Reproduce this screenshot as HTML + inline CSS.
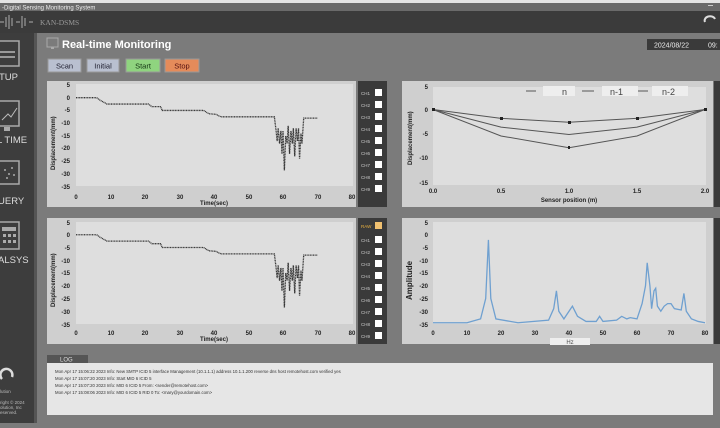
<!DOCTYPE html>
<html><head><meta charset="utf-8"><style>
body{margin:0;width:720px;height:423px;overflow:hidden;background:#7b7b7b;font-family:"Liberation Sans",sans-serif}
</style></head><body>
<svg width="720" height="423" xmlns="http://www.w3.org/2000/svg" font-family="Liberation Sans, sans-serif">
<rect width="720" height="423" fill="#7b7b7b"/>
<rect width="720" height="3" fill="#e4e4e4"/>
<rect y="3" width="720" height="8" fill="#6a6a6a"/>
<text x="2" y="9.5" font-size="6" fill="#eee">-Digital Sensing Monitoring System</text>
<rect x="708" y="5" width="5" height="1" fill="#ccc"/>
<rect y="11" width="720" height="22" fill="#3b3b3b"/>
<path d="M0 22 L4 22 M6 17 V27 M9 15 V29 M12 18 V26 M16 22 H20 M22 16 V28 M25 18 V26 M29 22 H33" stroke="#888" stroke-width="1.5"/>
<text x="40" y="25" font-size="7.5" fill="#999" font-family="Liberation Serif, serif">KAN-DSMS</text>
<path d="M705 22 a5 4 0 1 1 10 -3" stroke="#ddd" stroke-width="2" fill="none"/>
<rect x="0" y="33" width="34" height="390" fill="#3d3d3d"/>
<rect x="34" y="33" width="3" height="390" fill="#555"/>
<!-- sidebar -->
<g fill="none" stroke="#aaa" stroke-width="1.5">
<rect x="-2" y="41" width="21" height="25"/><rect x="-2" y="101" width="21" height="25"/><rect x="-2" y="161" width="21" height="23"/><rect x="-2" y="222" width="21" height="27"/>
</g>
<path d="M0 52 H15 M0 57 H15" stroke="#999" stroke-width="2"/>
<path d="M2 120 L8 114 L11 117 L17 108" stroke="#bbb" fill="none"/>
<rect x="4" y="127" width="6" height="4" fill="#aaa"/>
<g fill="#aaa"><circle cx="5" cy="170" r="1"/><circle cx="9" cy="174" r="1"/><circle cx="12" cy="168" r="1"/><circle cx="7" cy="178" r="1"/><circle cx="14" cy="175" r="1"/></g>
<g fill="#aaa"><rect x="2" y="227" width="14" height="4"/><rect x="3" y="234" width="3" height="3"/><rect x="8" y="234" width="3" height="3"/><rect x="13" y="234" width="3" height="3"/><rect x="3" y="240" width="3" height="3"/><rect x="8" y="240" width="3" height="3"/><rect x="13" y="240" width="3" height="3"/></g>
<g fill="#ddd" font-size="9.5"><text x="-1" y="80">TUP</text><text x="-3" y="143">L TIME</text><text x="-2" y="204">UERY</text><text x="-2" y="263">ALSYS</text></g>
<path d="M2 379 a6 6 0 1 1 10 -2" stroke="#ddd" stroke-width="2.5" fill="none"/>
<g fill="#bbb" font-size="4.5"><text x="0" y="393">lution</text><text x="0" y="404">right © 2024</text><text x="0" y="409">olution, Inc</text><text x="0" y="414">eserved.</text></g>
<!-- title -->
<rect x="47" y="38" width="11" height="9" fill="none" stroke="#aaa"/>
<rect x="51" y="47" width="3" height="2" fill="#aaa"/>
<text x="62" y="48" font-size="11" font-weight="bold" fill="#fff">Real-time Monitoring</text>
<rect x="647" y="39" width="73" height="11" fill="#3a3a3a"/>
<text x="654" y="47.5" font-size="7" fill="#eee">2024/08/22</text><text x="708" y="47.5" font-size="7" fill="#eee">09:</text>
<!-- buttons -->
<rect x="48" y="59" width="33" height="13" fill="#b9c0d0" stroke="#999"/><text x="64.5" y="68.5" font-size="7.5" text-anchor="middle" fill="#223">Scan</text>
<rect x="87" y="59" width="32" height="13" fill="#b9c0d0" stroke="#999"/><text x="103" y="68.5" font-size="7.5" text-anchor="middle" fill="#223">Initial</text>
<rect x="126" y="59" width="34" height="13" fill="#8fd47f" stroke="#999"/><text x="143" y="68.5" font-size="7.5" text-anchor="middle" fill="#131">Start</text>
<rect x="165" y="59" width="34" height="13" fill="#e58b5a" stroke="#999"/><text x="182" y="68.5" font-size="7.5" text-anchor="middle" fill="#511">Stop</text>
<!-- panels -->
<g>
<rect x="47" y="81" width="309" height="126" fill="#cfcfcf"/><rect x="76" y="84" width="277" height="102" fill="#dedede"/>
<rect x="47" y="218" width="309" height="126" fill="#cfcfcf"/><rect x="76" y="222" width="277" height="102" fill="#dedede"/>
<rect x="402" y="81" width="311" height="126" fill="#cfcfcf"/><rect x="433" y="87" width="273" height="98" fill="#dedede"/>
<rect x="402" y="218" width="311" height="126" fill="#cfcfcf"/><rect x="433" y="222" width="273" height="102" fill="#dedede"/>
<rect x="358" y="81" width="29" height="126" fill="#3a3a3a"/><rect x="358" y="218" width="29" height="126" fill="#3a3a3a"/>
<rect x="714" y="81" width="6" height="126" fill="#3a3a3a"/><rect x="714" y="218" width="6" height="126" fill="#3a3a3a"/>
</g>
<g font-size="4.5" fill="#ccc">
<text x="361" y="95">CH1</text><text x="361" y="107">CH2</text><text x="361" y="119">CH3</text><text x="361" y="131">CH4</text><text x="361" y="143">CH5</text><text x="361" y="155">CH6</text><text x="361" y="167">CH7</text><text x="361" y="179">CH8</text><text x="361" y="191">CH9</text>
<text x="361" y="228" fill="#e8b040">RAW</text><text x="361" y="242">CH1</text><text x="361" y="254">CH2</text><text x="361" y="266">CH3</text><text x="361" y="278">CH4</text><text x="361" y="290">CH5</text><text x="361" y="302">CH6</text><text x="361" y="314">CH7</text><text x="361" y="326">CH8</text><text x="361" y="338">CH9</text>
</g>
<g fill="#fff">
<rect x="375" y="89" width="7" height="7"/><rect x="375" y="101" width="7" height="7"/><rect x="375" y="113" width="7" height="7"/><rect x="375" y="125" width="7" height="7"/><rect x="375" y="137" width="7" height="7"/><rect x="375" y="149" width="7" height="7"/><rect x="375" y="161" width="7" height="7"/><rect x="375" y="173" width="7" height="7"/><rect x="375" y="185" width="7" height="7"/>
<rect x="375" y="222" width="7" height="7" fill="#f0c070"/><rect x="375" y="236" width="7" height="7"/><rect x="375" y="248" width="7" height="7"/><rect x="375" y="260" width="7" height="7"/><rect x="375" y="272" width="7" height="7"/><rect x="375" y="284" width="7" height="7"/><rect x="375" y="296" width="7" height="7"/><rect x="375" y="308" width="7" height="7"/><rect x="375" y="320" width="7" height="7"/><rect x="375" y="332" width="7" height="7"/>
</g>
<!-- axes labels chart1 -->
<g font-size="6" fill="#222" font-weight="bold" text-anchor="end">
<text x="70" y="87">5</text><text x="70" y="100">0</text><text x="70" y="112">-5</text><text x="70" y="125">-10</text><text x="70" y="138">-15</text><text x="70" y="150">-20</text><text x="70" y="163">-25</text><text x="70" y="176">-30</text><text x="70" y="189">-35</text>
<text x="70" y="225">5</text><text x="70" y="237">0</text><text x="70" y="250">-5</text><text x="70" y="263">-10</text><text x="70" y="275">-15</text><text x="70" y="288">-20</text><text x="70" y="301">-25</text><text x="70" y="314">-30</text><text x="70" y="327">-35</text>
<text x="428" y="89">5</text><text x="428" y="112">0</text><text x="428" y="136">-5</text><text x="428" y="160">-10</text><text x="428" y="185">-15</text>
<text x="428" y="225">5</text><text x="428" y="237">0</text><text x="428" y="250">-5</text><text x="428" y="263">-10</text><text x="428" y="275">-15</text><text x="428" y="288">-20</text><text x="428" y="301">-25</text><text x="428" y="314">-30</text><text x="428" y="327">-35</text>
</g>
<g font-size="6" fill="#222" font-weight="bold" text-anchor="middle">
<text x="76" y="199">0</text><text x="111" y="199">10</text><text x="145" y="199">20</text><text x="180" y="199">30</text><text x="214" y="199">40</text><text x="249" y="199">50</text><text x="283" y="199">60</text><text x="318" y="199">70</text><text x="352" y="199">80</text>
<text x="214" y="205">Time(sec)</text>
<text x="76" y="335">0</text><text x="111" y="335">10</text><text x="145" y="335">20</text><text x="180" y="335">30</text><text x="214" y="335">40</text><text x="249" y="335">50</text><text x="283" y="335">60</text><text x="318" y="335">70</text><text x="352" y="335">80</text>
<text x="214" y="341">Time(sec)</text>
<text x="433" y="193">0.0</text><text x="501" y="193">0.5</text><text x="569" y="193">1.0</text><text x="637" y="193">1.5</text><text x="705" y="193">2.0</text>
<text x="569" y="202">Sensor position (m)</text>
<text x="433" y="335">0</text><text x="467" y="335">10</text><text x="501" y="335">20</text><text x="535" y="335">30</text><text x="569" y="335">40</text><text x="603" y="335">50</text><text x="637" y="335">60</text><text x="671" y="335">70</text><text x="705" y="335">80</text>
</g>
<rect x="550" y="338" width="40" height="7" fill="#eee"/><text x="570" y="344" font-size="6" text-anchor="middle" fill="#555">Hz</text>
<g font-size="6" fill="#222" font-weight="bold">
<text transform="translate(55,170) rotate(-90)">Displacement(mm)</text>
<text transform="translate(55,307) rotate(-90)">Displacement(mm)</text>
<text transform="translate(412,165) rotate(-90)">Displacement(mm)</text>
<text transform="translate(412,300) rotate(-90)" font-size="8">Amplitude</text>
</g>
<!-- legend -->
<g font-size="9" fill="#444">
<rect x="543" y="86" width="32" height="10" fill="#eee"/><text x="562" y="95">n</text>
<rect x="602" y="86" width="36" height="10" fill="#eee"/><text x="610" y="95">n-1</text>
<rect x="652" y="86" width="36" height="10" fill="#eee"/><text x="662" y="95">n-2</text>
<path d="M526 91 H536 M582 91 H594 M638 91 H648" stroke="#555"/>
</g>
<!-- data -->
<g fill="none" stroke="#333" stroke-width="1.3" stroke-dasharray="1 0.6">
<polyline transform="matrix(3.45 0 0 -2.55 76 97.7)" vector-effect="non-scaling-stroke" points="0,0 6,0 7,-1 9,-2.5 21,-2.5 22,-3.5 24.5,-3.5 25,-5 37,-5 38.5,-6.3 40.5,-6.5 42,-7.5 57.5,-7.5 58,-13 58.3,-17 58.6,-12 59,-18 59.4,-13 59.7,-22 60,-13 60.4,-28.5 60.8,-15 61.2,-18 61.5,-11 61.9,-22 62.3,-13 62.7,-18 63,-12 63.4,-23 63.8,-12 64.2,-17 64.5,-12 64.8,-24 65.2,-14 65.5,-18 66,-8 70,-8"/>
<polyline transform="matrix(3.45 0 0 -2.55 76 234.75)" vector-effect="non-scaling-stroke" points="0,0 6,0 7,-1 9,-2.5 21,-2.5 22,-3.5 24.5,-3.5 25,-5 37,-5 38.5,-6.3 40.5,-6.5 42,-7.5 57.5,-7.5 58,-13 58.3,-17 58.6,-12 59,-18 59.4,-13 59.7,-22 60,-13 60.4,-28.5 60.8,-15 61.2,-18 61.5,-11 61.9,-22 62.3,-13 62.7,-18 63,-12 63.4,-23 63.8,-12 64.2,-17 64.5,-12 64.8,-24 65.2,-14 65.5,-18 66,-8 70,-8"/>
</g>
<g fill="none" stroke="#555" stroke-width="1" transform="matrix(136 0 0 -4.9 433 109.5)">
<polyline vector-effect="non-scaling-stroke" points="0,0 0.5,-1.8 1,-2.6 1.5,-1.8 2,0"/>
<polyline vector-effect="non-scaling-stroke" points="0,0 0.5,-3.6 1,-5.1 1.5,-3.6 2,0"/>
<polyline vector-effect="non-scaling-stroke" points="0,0 0.5,-5.4 1,-7.8 1.5,-5.4 2,0"/>
</g>
<g fill="#222"><rect x="500" y="117" width="3" height="3"/><rect x="568" y="121" width="3" height="3"/><rect x="636" y="117" width="3" height="3"/><rect x="432" y="108" width="3" height="3"/><rect x="704" y="108" width="3" height="3"/><rect x="568" y="146" width="2" height="2"/><rect x="568" y="147" width="2" height="2"/></g>
<polyline transform="matrix(3.4 0 0 -2.55 433 234.75)" vector-effect="non-scaling-stroke" fill="none" stroke="#6fa0d0" stroke-width="1.3" points="0,-34.5 10,-34.5 14,-33 15.5,-25 16.3,-2 17,-25 18.5,-33 25,-34.5 34,-33.5 35.5,-29 36.3,-22 37,-30 38.5,-33 40,-30 41,-28 42.5,-32 45,-34 48,-34 49,-32 50,-34 54,-33.5 55.5,-32 57,-33 58,-32.5 60,-33 61.5,-27 62.5,-20 63,-11 63.8,-20 64.3,-29 65,-22 65.5,-21 66,-28 67,-30 68,-28 69,-27 70,-27 71,-29 73,-29.5 73.8,-23 74.5,-30 76,-33 78,-34 80,-34.5"/>
<!-- log -->
<rect x="47" y="355" width="41" height="8" fill="#555"/><text x="60" y="361.5" font-size="6" fill="#ddd">LOG</text>
<rect x="47" y="363" width="666" height="52" fill="#e6e6e6"/>
<g font-size="4.3" fill="#333">
<text x="55" y="373">Mon Apr 17 15:06:22 2023 Info: New SMTP ICID 5 interface Management (10.1.1.1) address 10.1.1.200 reverse dns host remotehost.com verified yes</text>
<text x="55" y="380">Mon Apr 17 15:07:20 2023 Info: Start MID 6 ICID 5</text>
<text x="55" y="387">Mon Apr 17 15:07:20 2023 Info: MID 6 ICID 5 From: &lt;sender@remotehost.com&gt;</text>
<text x="55" y="394">Mon Apr 17 15:08:06 2023 Info: MID 6 ICID 5 RID 0 To: &lt;mary@yourdomain.com&gt;</text>
</g>
</svg>
</body></html>
